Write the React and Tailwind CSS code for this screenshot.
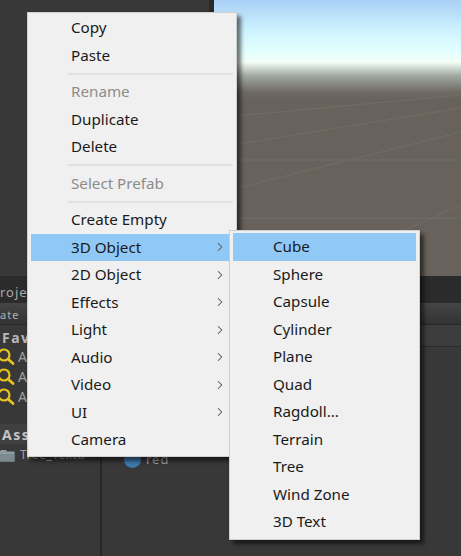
import { ChevronRight } from 'lucide-react';

const font = { fontFamily: '"Noto Sans", sans-serif' };

const mainItems = [
  { label: 'Copy' },
  { label: 'Paste' },
  { sep: true },
  { label: 'Rename', disabled: true },
  { label: 'Duplicate' },
  { label: 'Delete' },
  { sep: true },
  { label: 'Select Prefab', disabled: true },
  { sep: true },
  { label: 'Create Empty' },
  { label: '3D Object', arrow: true, active: true },
  { label: '2D Object', arrow: true },
  { label: 'Effects', arrow: true },
  { label: 'Light', arrow: true },
  { label: 'Audio', arrow: true },
  { label: 'Video', arrow: true },
  { label: 'UI', arrow: true },
  { label: 'Camera' },
];

const subItems = ['Cube', 'Sphere', 'Capsule', 'Cylinder', 'Plane', 'Quad', 'Ragdoll...', 'Terrain', 'Tree', 'Wind Zone', '3D Text'];

const MenuRow = ({ item }) => (
  <div className={`flex items-center justify-between h-[27.5px] pl-[40px] text-[15.2px] leading-none ${item.active ? 'bg-[#90c8f6]' : ''} ${item.disabled ? 'text-[#8c8c8c]' : 'text-[#1a1a1a]'}`}>
    <span>{item.label}</span>
    {item.arrow && <ChevronRight className="w-[14px] h-[14px] mr-[6px] text-[#555555]" strokeWidth={1.8} />}
  </div>
);

const SearchIcon = () => (
  <svg width="19" height="19" viewBox="0 0 19 19" fill="none" className="shrink-0 -ml-[4px]">
    <circle cx="8" cy="8" r="5.5" stroke="#e8c41c" strokeWidth="2.2" />
    <path d="M12.5 12.5L17 16.5" stroke="#e8c41c" strokeWidth="2.8" strokeLinecap="round" />
  </svg>
);

const FolderIcon = () => (
  <svg width="15" height="13" viewBox="0 0 15 13" className="shrink-0">
    <path d="M0 2.5L1 1H6L7 2.5H14.5V12.5H0Z" fill="#8f9da2" />
    <path d="M0 5H14.5V12.5H0Z" fill="#7c8a8e" />
  </svg>
);

const Scene = () => (
  <div className="relative flex-1 bg-[linear-gradient(180deg,#a9cff5_0px,#cdf3ff_30px,#e2ffff_50px,#f4fff8_62px,#9fa8a0_76px,#6f6a64_92px,#69625c_100px)]">
    <svg className="absolute inset-0 w-full h-full" viewBox="0 0 247 276" fill="none" stroke="#736d67" strokeWidth="1">
      <path d="M0 160H247" />
      <path d="M0 218H247" />
      <path d="M0 118L247 95" />
      <path d="M0 148L247 108" />
      <path d="M0 194L247 132" />
      <path d="M180 235L247 205" />
    </svg>
  </div>
);

export default function App() {
  return (
    <div className="relative w-[461px] h-[556px] overflow-hidden bg-[#383838]" style={font}>
      {/* Editor behind the menus */}
      <div className="flex h-[276px]">
        <div className="w-[209px] bg-[#383838]" />
        <div className="w-[5px] bg-[#2a2a2a]" />
        <Scene />
      </div>
      <div className="h-[27px] bg-[#2b2b2b] flex items-center text-[13px] tracking-[1px] text-[#a8a8a8] pt-[6px]">
        <span>rojec</span>
      </div>
      <div className="h-[22px] bg-[linear-gradient(180deg,#454545,#333333)] flex items-center gap-[8px] text-[11px] tracking-[1px] text-[#b0b0b0] border-b border-[#272727] pt-[3px]">
        <span>ate</span>
        <div className="w-0 h-0 border-x-[3px] border-x-transparent border-t-[3px] border-t-[#a0a0a0]" />
      </div>
      <div className="flex h-[231px]">
        <div className="w-[102px] border-r-2 border-[#262626] text-[14px] text-[#a0a0a0]">
          <div className="h-[23px] pl-[2px] pt-[2px] flex items-center font-bold tracking-[1.5px] text-[#b8b8b8]">Fav</div>
          <div className="flex flex-col gap-[3px]">
            <div className="flex items-center h-[17px] gap-[3px]"><SearchIcon />A</div>
            <div className="flex items-center h-[17px] gap-[3px]"><SearchIcon />A</div>
            <div className="flex items-center h-[17px] gap-[3px]"><SearchIcon />A</div>
          </div>
          <div className="mt-[19px] h-[20px] bg-[#404040] pl-[2px] flex items-center font-bold tracking-[1.5px] text-[#c4c4c4]">Ass</div>
          <div className="flex items-center gap-[5px] h-[22px] text-[12px] tracking-[0.5px]">
            <FolderIcon />
            Tree_Textu
          </div>
        </div>
        <div className="flex-1">
          <div className="h-[22px] bg-[#3d3d3d] border-b border-[#2b2b2b]" />
          <div className="flex items-center gap-[5px] ml-[22px] mt-[103px] text-[13px] tracking-[1px] text-[#a0a0a0]">
            <div className="w-[17px] h-[17px] rounded-full bg-[#3f78b0]" />
            red
          </div>
        </div>
      </div>

      {/* Context menu */}
      <div className="absolute left-[27px] top-[12px] w-[210px] h-[445px] bg-[#f0f0f0] border border-[#cfcfcf] pt-[1px] px-[3px] shadow-[4px_4px_4px_rgba(0,0,0,0.55)]">
        {mainItems.map((item, i) =>
          item.sep ? (
            <div key={i} className="h-[9px] flex items-center pl-[37px]">
              <div className="h-[2px] w-full bg-[#e0e0e0]" />
            </div>
          ) : (
            <MenuRow key={i} item={item} />
          )
        )}
      </div>

      {/* 3D Object submenu */}
      <div className="absolute left-[229px] top-[230px] w-[191px] h-[310px] bg-[#f0f0f0] border border-[#cfcfcf] py-[2px] px-[3px] shadow-[4px_4px_4px_rgba(0,0,0,0.55)]">
        {subItems.map((label, i) => (
          <MenuRow key={label} item={{ label, active: i === 0 }} />
        ))}
      </div>
    </div>
  );
}
